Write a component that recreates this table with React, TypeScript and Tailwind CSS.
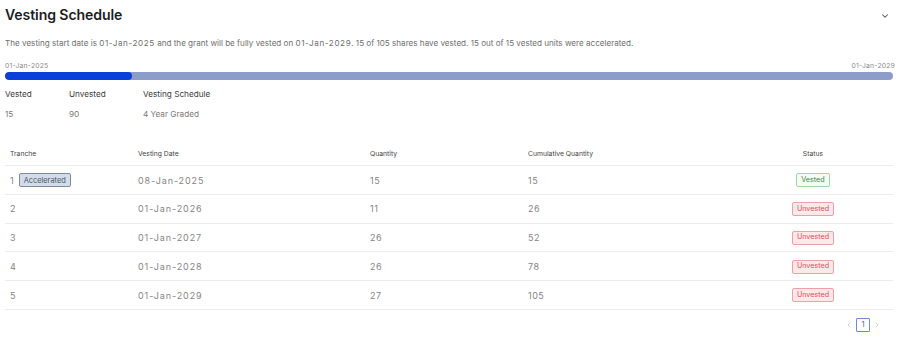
import React from "react";

const rows = [
  { t: "1", acc: true, date: "08-Jan-2025", q: "15", c: "15", vested: true },
  { t: "2", acc: false, date: "01-Jan-2026", q: "11", c: "26", vested: false },
  { t: "3", acc: false, date: "01-Jan-2027", q: "26", c: "52", vested: false },
  { t: "4", acc: false, date: "01-Jan-2028", q: "26", c: "78", vested: false },
  { t: "5", acc: false, date: "01-Jan-2029", q: "27", c: "105", vested: false },
];

const cols = "grid grid-cols-[128px_232px_158px_210px_1fr]";

export default function App() {
  return (
    <div className="w-[900px] h-[350px] bg-white overflow-hidden px-[5px]" style={{ fontFamily: "Inter, 'Noto Sans', sans-serif" }}>
      <div className="flex items-center justify-between h-[28px] pt-[1px]">
        <h1 className="text-[14.1px] font-semibold text-[#1d1d1f] tracking-[-0.1px]">Vesting Schedule</h1>
        <svg width="10" height="10" viewBox="0 0 24 24" fill="none" stroke="#555" strokeWidth="2.5" strokeLinecap="round" strokeLinejoin="round" className="mr-[5px] mt-[2px]">
          <path d="M6 9l6 6 6-6" />
        </svg>
      </div>
      <p className="mt-[9px] text-[8.1px] text-[#6f6f6f] leading-[12px]">
        The vesting start date is <span className="tracking-[0.6px]">01-Jan-2025</span> and the grant will be fully vested on <span className="tracking-[0.6px]">01-Jan-2029</span>. 15 of 105 shares have vested. 15 out of 15 vested units were accelerated.
      </p>
      <div className="mt-[12px] flex justify-between text-[6.8px] text-[#8a8a8a] leading-[10px]">
        <span className="tracking-[0.2px]">01-Jan-2025</span>
        <span className="tracking-[0.2px]">01-Jan-2029</span>
      </div>
      <div className="mt-[1px] h-[8px] w-[888px] rounded-full bg-[#8b9dc8] overflow-hidden">
        <div className="h-full bg-[#0b3fd9] rounded-full" style={{ width: 127 }} />
      </div>
      <div className="mt-[8px] flex text-[8.2px] leading-[12px]">
        <div className="w-[64px]">
          <div className="text-[#3d3d3d]">Vested</div>
          <div className="mt-[8px] text-[#7a7a7a]">15</div>
        </div>
        <div className="w-[74px]">
          <div className="text-[#3d3d3d]">Unvested</div>
          <div className="mt-[8px] text-[#7a7a7a]">90</div>
        </div>
        <div>
          <div className="text-[#3d3d3d]">Vesting Schedule</div>
          <div className="mt-[8px] text-[#7a7a7a]">4 Year Graded</div>
        </div>
      </div>
      <div className="mt-[24px] w-[888px]">
        <div className={`${cols} h-[22px] items-center border-b border-[#ececec] text-[6.8px] text-[#444]`}>
          <div className="pl-[5px]">Tranche</div>
          <div className="pl-[5px]">Vesting Date</div>
          <div className="pl-[5px]">Quantity</div>
          <div className="pl-[5px]">Cumulative Quantity</div>
          <div className="text-center">Status</div>
        </div>
        {rows.map((r) => (
          <div key={r.t} className={`${cols} h-[28.75px] items-center pt-[1px] border-b border-[#ececec] text-[9px] text-[#858585]`}>
            <div className="pl-[5px] flex items-center gap-[5px]">
              <span>{r.t}</span>
              {r.acc && (
                <span className="inline-flex items-center h-[14px] px-[4px] rounded-[2px] border border-[#7d8aa2] bg-[#d3dcea] text-[7.4px] text-[#4b5565]">
                  Accelerated
                </span>
              )}
            </div>
            <div className="pl-[5px] tracking-[0.9px]">{r.date}</div>
            <div className="pl-[5px] tracking-[0.5px]">{r.q}</div>
            <div className="pl-[5px] tracking-[0.5px]">{r.c}</div>
            <div className="flex justify-center">
              {r.vested ? (
                <span className="inline-flex items-center h-[14px] px-[4px] rounded-[2px] border border-[#a3d6a3] bg-[#f4fbf4] text-[7.2px] text-[#3f8a45]">
                  Vested
                </span>
              ) : (
                <span className="inline-flex items-center h-[14px] px-[4px] rounded-[2px] border border-[#f0a0a4] bg-[#fde9ea] text-[7.2px] text-[#df4f58]">
                  Unvested
                </span>
              )}
            </div>
          </div>
        ))}
      </div>
      <div className="mt-[8px] w-[888px] flex justify-end items-center gap-[3px] pr-[12px]">
        <svg width="8" height="8" viewBox="0 0 24 24" fill="none" stroke="#c8c8c8" strokeWidth="2.5" strokeLinecap="round" strokeLinejoin="round">
          <path d="M15 6l-6 6 6 6" />
        </svg>
        <span className="w-[14px] h-[14px] flex items-center justify-center border border-[#6e8ad6] rounded-[1px] text-[7.5px] text-[#3f62c4]">1</span>
        <svg width="8" height="8" viewBox="0 0 24 24" fill="none" stroke="#c8c8c8" strokeWidth="2.5" strokeLinecap="round" strokeLinejoin="round">
          <path d="M9 6l6 6-6 6" />
        </svg>
      </div>
    </div>
  );
}
